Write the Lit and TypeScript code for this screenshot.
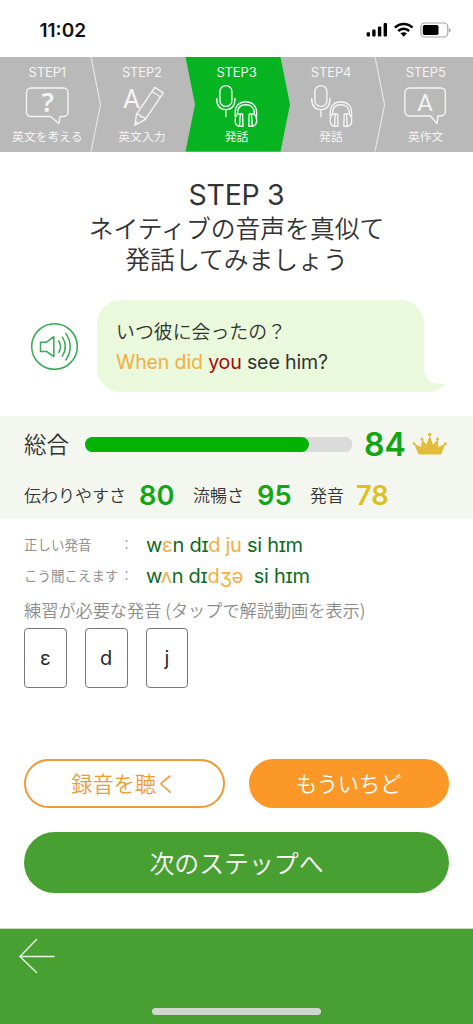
import { LitElement, html, svg, css } from "lit";
import { customElement } from "lit/decorators.js";

const voiceIcon = svg`
  <rect x="30.9" y="2.6" width="12" height="20.8" rx="6"/>
  <path d="M27.7 15.5C27.7 23 31.5 26.6 36.9 26.6S46 23 46 15.5M36.9 26.6V33.5"/>
  <path d="M46.2 33.5V29.5C46.2 22.5 50.7 18.7 56.8 18.7S67.6 22.5 67.6 29.5V33.5"/>
  <path d="M48.4 30.5C48.4 24.7 51.8 21.7 56.8 21.7S65.4 24.7 65.4 30.5"/>
  <path d="M50.6 30.6 53.6 31.2 54 43.2H50.2C47.2 42.6 46 40.5 46.1 37.2S47.6 31.2 50.6 30.6ZM51.3 31.5 50.5 43"/>
  <path d="M63.2 30.6 60.2 31.2 59.8 43.2H63.6C66.6 42.6 67.8 40.5 67.7 37.2S66.2 31.2 63.2 30.6ZM62.5 31.5 63.3 43"/>`;

const thinkIcon = svg`
  <path d="M31 5H63.5A4.5 4.5 0 0 1 68 9.5V29A4.5 4.5 0 0 1 63.5 33.500H60L59 40.500 50.500 33.500H31A4.500 4.500 0 0 1 26.500 29V9.500A4.500 4.500 0 0 1 31 5Z"/>
  <text class="q" x="47.800" y="28.600">?</text>`;

const writeIcon = svg`
  <text class="a" x="36.600" y="24.600">A</text>
  <path d="M59.800 4.300 68.300 9.800 50.300 36.400 39.800 42.300 41.600 31.200ZM57 8.500 65.500 14M41.600 31.200C44 31 45.500 32 46 34 48 33.600 49.600 34.500 50.300 36.400M40.500 38.700 43 40.400"/>`;

const answerIcon = svg`
  <path d="M31.400 5H62.900A4.500 4.500 0 0 1 67.400 9.500V28.500A4.500 4.500 0 0 1 62.900 33H59.800L59.200 40.500 52.500 33H31.400A4.500 4.500 0 0 1 26.900 28.500V9.500A4.500 4.500 0 0 1 31.400 5Z"/>
  <text class="a small" x="47.200" y="28.400">A</text>`;

const STEPS = [
  { name: "STEP1", label: "英文を考える", icon: thinkIcon },
  { name: "STEP2", label: "英文入力", icon: writeIcon },
  { name: "STEP3", label: "発話", icon: voiceIcon },
  { name: "STEP4", label: "発話", icon: voiceIcon },
  { name: "STEP5", label: "英作文", icon: answerIcon },
];

@customElement("step-bar")
class StepBar extends LitElement {
  static styles = css`
    :host { display: block; position: relative; height: 94.500px; background: #b9b9b9; color: #fff; }
    .edges { position: absolute; inset: 0; width: 473px; height: 94.500px; }
    .steps { position: relative; display: grid; grid-template-columns: repeat(5, 1fr); height: 100%; }
    .step { display: flex; flex-direction: column; align-items: center; opacity: 0.85; }
    .step.on { opacity: 0.95; }
    .name { font: 400 13px/16px Inter, sans-serif; margin-top: 7px; letter-spacing: -0.150px; }
    .icon { width: 94.600px; height: 46px; margin-top: 2.500px; fill: none; stroke: #fff; stroke-width: 1.400; stroke-linejoin: round; stroke-linecap: round; overflow: visible; }
    .icon text { fill: #fff; stroke: none; text-anchor: middle; }
    .q { font: 600 27px "Noto Sans", sans-serif; }
    .a { font: 400 26px Roboto, sans-serif; }
    .small { font-size: 24px; }
    .label { font: 400 11.800px/14px "Noto Sans CJK JP", sans-serif; white-space: nowrap; }
  `;
  render() {
    return html`
      <svg class="edges" viewBox="0 0 473 94.500">
        <path d="M185.500 0H280.500L290 47.500 280.500 94.500H185.500L195 47.500Z" fill="#06b422"/>
        <path d="M91 0 100.500 47.500 91 94.500M375 0 384.600 47.500 375 94.500" fill="none" stroke="#e6e6e6" stroke-width="1.200"/>
      </svg>
      <div class="steps">
        ${STEPS.map((s, i) => html`<div class="step ${i === 2 ? "on" : ""}">
          <div class="name">${s.name}</div>
          <svg class="icon" viewBox="0 0 94.600 46">${s.icon}</svg>
          <div class="label">${s.label}</div>
        </div>`)}
      </div>`;
  }
}

@customElement("app-root")
class AppRoot extends LitElement {
  static styles = css`
    :host { display: flex; flex-direction: column; width: 473px; height: 1024px; background: #fff; overflow: hidden; color: #333;
      font-family: Inter, "Noto Sans CJK JP", sans-serif; }
    * { box-sizing: border-box; }
    div, span, button { white-space: nowrap; }
    .status { height: 57px; padding: 20px 22px 0 39.500px; display: flex; justify-content: space-between; flex: none; }
    .time { font: 600 19px/22px Inter, sans-serif; color: #111; letter-spacing: 0; }
    .sys { width: 86px; height: 20px; }
    .title { height: 148.500px; padding-top: 26.500px; text-align: center; flex: none; color: #333; }
    .t1 { font: 400 28.500px/34px Inter, sans-serif; letter-spacing: -0.300px; }
    .t2 { font: 350 24.800px/31.200px "Noto Sans CJK JP", sans-serif; }
    .prompt { display: flex; height: 92px; padding-left: 30px; align-items: center; flex: none; }
    .speaker { width: 48px; height: 48px; margin-right: 19px; }
    .bubble { position: relative; width: 327px; height: 92px; border-radius: 24px 24px 0 24px; background: #eaf8dc; padding: 16px 19px; }
    .tail { position: absolute; left: 300px; top: 60px; width: 50px; height: 32px; }
    .jp { font: 350 18.900px/30px "Noto Sans CJK JP", sans-serif; color: #333; }
    .en { font-size: 19.600px; line-height: 33px; letter-spacing: -0.170px; }
    .o { color: #f3b03e; }
    .r { color: #a00c0c; }
    .scores { margin-top: 24px; height: 103px; background: #f3f7f0; padding: 0 24px; flex: none; }
    .total { display: flex; align-items: center; height: 56px; }
    .total .lab { font: 350 22.500px/30px "Noto Sans CJK JP", sans-serif; width: 61px; margin-top: -2px; }
    .track { width: 267px; height: 15px; border-radius: 6px; background: #dadada; }
    .fill { height: 15px; border-radius: 7.500px; background: #04b204; }
    .big { font-size: 32px; font-weight: 600; color: #13a613; margin-left: 12px; width: 48px; }
    .crown { width: 36px; height: 24px; }
    .subs { display: flex; align-items: center; height: 46px; font: 350 17px/24px "Noto Sans CJK JP", sans-serif; }
    .subs b { font: 600 27.300px/30px Inter, sans-serif; color: #13a613; padding-top: 2px; }
    .subs .y { color: #dcc020; }
    .ipa { display: flex; align-items: center; height: 31px; padding-left: 24px; flex: none; }
    .first { margin-top: 10.500px; }
    .ipa .k { font: 350 13.500px/18px "Noto Sans CJK JP", sans-serif; color: #888; width: 96px; padding-bottom: 2px; }
    .ipa .c { width: 26px; font: 350 13px/18px "Noto Sans CJK JP", sans-serif; color: #888; padding-bottom: 2px; }
    .ipa .v { font-size: 20px; color: #106a1c; white-space: pre; letter-spacing: -0.280px; }
    .need { height: 36.500px; padding-left: 24px; font: 350 17.180px/35px "Noto Sans CJK JP", sans-serif; color: #8c8c8c; flex: none; }
    .cards { display: flex; gap: 18px; padding-left: 24px; height: 60px; flex: none; }
    .card { width: 42.800px; height: 60px; border: 1.200px solid #777; border-radius: 4px; display: grid; place-items: center; font-size: 20px; color: #2a2a2a; }
    .row { display: grid; grid-template-columns: 1fr 1fr; gap: 24px; padding: 0 24px; margin-top: 71px; flex: none; }
    .btn { border: 0; margin: 0; padding: 0; border-radius: 31px; height: 49px; color: #fff; background: #fb9827; font: 350 21.200px/30px "Noto Sans CJK JP", sans-serif; padding-bottom: 2px; }
    .line { background: #fff; border: 2px solid #ee9a35; color: #ee9a35; }
    .next { flex: none; height: 61px; margin: 24px 24px 0; background: #47a031; font-size: 24.900px; line-height: 36px; }
    .foot { margin-top: auto; height: 96px; background: #47a031; border-top: 1px solid #c5dfbd; display: flex; flex-direction: column; flex: none; justify-content: space-between; }
    .arrow { width: 38px; height: 38px; margin: 8px 0 0 18px; }
    .home { align-self: center; width: 169px; height: 7px; border-radius: 4px; background: #d2d6d0; margin-bottom: 9px; }
  `;
  render() {
    return html`
      <div class="status">
        <span class="time">11:02</span>
        <svg class="sys" viewBox="365 20 86 20">
          <g fill="#000">
            <rect x="366.600" y="32.200" width="3.400" height="4.300" rx="1"/><rect x="372.200" y="29.500" width="3.400" height="7" rx="1"/>
            <rect x="377.900" y="26.400" width="3.400" height="10.100" rx="1"/><rect x="383.600" y="23" width="3.400" height="13.500" rx="1"/>
            <path d="M403.700 36.700 400.500 33.300C402.300 31.800 405.100 31.800 406.900 33.300Z"/>
            <rect x="422.800" y="25" width="15.700" height="10" rx="1.800"/>
            <path d="M449 28.200V32.200Q450.600 31.600 450.600 30.200T449 28.200Z" fill="#999"/>
          </g>
          <path d="M394.900 27.600C400 22.700 407.500 22.700 412.500 27.600M398.200 31C401.400 28 406 28 409.200 31" fill="none" stroke="#000" stroke-width="2.400"/>
          <rect x="420.800" y="23" width="27" height="14" rx="4" fill="none" stroke="#a5a5a5" stroke-width="1.200"/>
        </svg>
      </div>
      <step-bar></step-bar>
      <div class="title">
        <div class="t1">STEP 3</div>
        <div class="t2">ネイティブの音声を真似て</div>
        <div class="t2">発話してみましょう</div>
      </div>
      <div class="prompt">
        <svg class="speaker" viewBox="0 0 48 48" fill="none" stroke="#35ab52" stroke-width="1.500" stroke-linejoin="round" stroke-linecap="round">
          <circle cx="24.500" cy="24.500" r="22.800"/>
          <path d="M10.500 20.200H16.500L23.800 14.700V34.700L16.500 29.400H10.500ZM28.700 19Q32.300 24.500 28.700 30.300M32.300 15.200Q38.500 24.500 32.300 34.200M35.800 11.300Q44.600 24.500 35.800 38"/>
        </svg>
        <div class="bubble">
          <svg class="tail" viewBox="300 60 50 32"><path d="M300 60H327V67C327 78 333 86 350 83.500C343 88.500 338 92 330 92H300Z" fill="#eaf8dc"/></svg>
          <div class="jp">いつ彼に会ったの？</div>
          <div class="en"><span class="o">When did</span> <span class="r">you</span> see him?</div>
        </div>
      </div>
      <div class="scores">
        <div class="total">
          <span class="lab">総合</span>
          <div class="track"><div class="fill" style="width:84%"></div></div>
          <span class="big">84</span>
          <svg class="crown" viewBox="0 0 36 24" fill="#e2bd3b">
            <path d="M6.500 22.500 2 11.500 9 15 10 7.500 14.500 12.500 17.700 3 20.900 12.500 25.500 7.500 26.500 15 33.500 11.500 29.200 22.500Z"/>
            <circle cx="17.700" cy="2.500" r="1.800"/><circle cx="9.900" cy="7" r="1.500"/><circle cx="25.600" cy="7" r="1.500"/><circle cx="2" cy="11.700" r="1.400"/><circle cx="33.500" cy="11.700" r="1.400"/>
          </svg>
        </div>
        <div class="subs">
          <span style="width:115px">伝わりやすさ</span><b style="width:54px">80</b>
          <span style="width:64px">流暢さ</span><b style="width:53px">95</b>
          <span style="width:46px">発音</span><b class="y">78</b>
        </div>
      </div>
      <div class="ipa first"><span class="k">正しい発音</span><span class="c">：</span><span class="v">w<span class="o">ɛ</span>n dɪ<span class="o">d ju</span> si hɪm</span></div>
      <div class="ipa"><span class="k">こう聞こえます</span><span class="c">：</span><span class="v">w<span class="o">ʌ</span>n dɪ<span class="o">dʒə</span>  si hɪm</span></div>
      <div class="need">練習が必要な発音 (タップで解説動画を表示)</div>
      <div class="cards"><div class="card">ɛ</div><div class="card">d</div><div class="card">j</div></div>
      <div class="row"><button class="btn line">録音を聴く</button><button class="btn">もういちど</button></div>
      <button class="btn next">次のステップへ</button>
      <div class="foot">
        <svg class="arrow" viewBox="18 937 38 38" fill="none" stroke="#e6f3e2" stroke-width="1.500" stroke-linecap="round"><path d="M54 956.500H20M36.500 939.500 20 956.500 36.500 972.500"/></svg>
        <div class="home"></div>
      </div>`;
  }
}
